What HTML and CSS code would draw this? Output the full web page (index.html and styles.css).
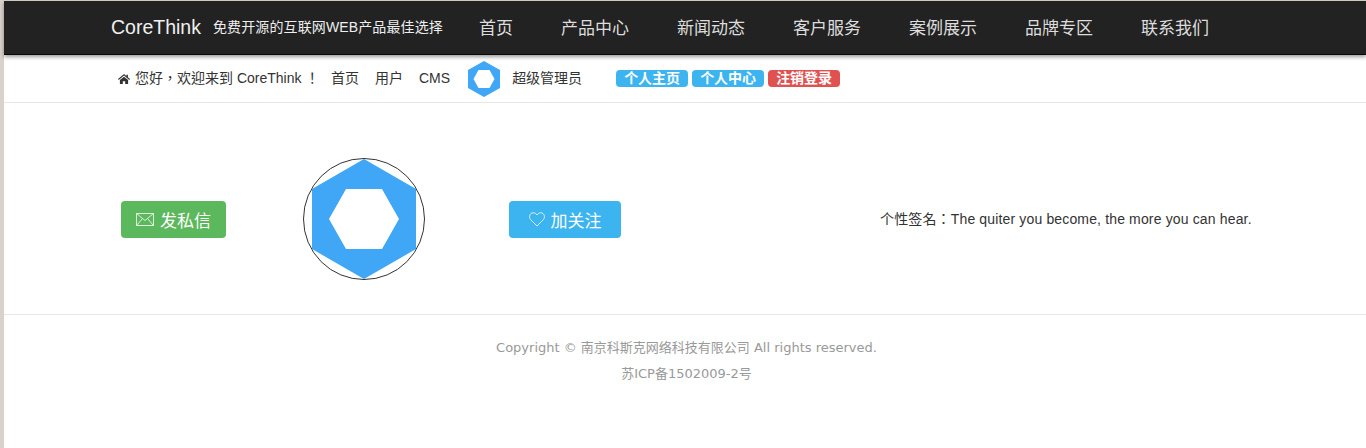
FILE: index.html
```html
<!DOCTYPE html>
<html lang="zh-CN">
<head>
<meta charset="utf-8">
<title>CoreThink</title>
<link rel="stylesheet" href="styles.css">
</head>
<body>
<div class="page">
  <header class="navbar">
    <a class="brand">CoreThink</a>
    <span class="slogan">免费开源的互联网WEB产品最佳选择</span>
    <nav class="mainnav">
      <a>首页</a><a>产品中心</a><a>新闻动态</a><a>客户服务</a><a>案例展示</a><a>品牌专区</a><a>联系我们</a>
    </nav>
  </header>
  <div class="topbar">
    <svg class="home" viewBox="0 0 12 10" width="12" height="10"><path fill="#333" d="M6 0 L8.4 2 V0.8 H9.9 V3.3 L12 5.1 L11.3 5.9 L6 1.6 L0.7 5.9 L0 5.1 Z M1.9 6 L6 2.7 L10.1 6 V10 H7.2 V7.2 H4.8 V10 H1.9 Z"/></svg>
    <span class="welcome" lang="zh-TW">您好，欢迎来到 CoreThink ！</span>
    <a class="toplink">首页</a><a class="toplink">用户</a><a class="toplink latin">CMS</a>
    <svg class="miniavatar" viewBox="0 0 32 36" width="32" height="36"><path fill="#3fa7f5" fill-rule="evenodd" d="M16 0 L32 9 V27 L16 36 L0 27 V9 Z M10.5 9 L5.5 18 L10.5 27 H21.5 L26.5 18 L21.5 9 Z"/></svg>
    <span class="username">超级管理员</span>
    <div class="labels">
      <span class="label blue">个人主页</span><span class="label blue">个人中心</span><span class="label red">注销登录</span>
    </div>
  </div>
  <section class="profile">
    <a class="btn green"><svg viewBox="0 0 18 13" width="18" height="13"><path fill="none" stroke="#fff" stroke-width="0.8" d="M0.5 0.5 H17.5 V12.5 H0.5 Z M0.5 0.5 L9 7.5 L17.5 0.5 M0.5 12.5 L6.5 5.5 M17.5 12.5 L11.5 5.5"/></svg>发私信</a>
    <div class="avatar">
      <svg viewBox="0 0 104 120" width="104" height="120"><path fill="#3fa7f5" fill-rule="evenodd" d="M52 0 L104 30 V90 L52 120 L0 90 V30 Z M34 30 L17 60 L34 90 H70 L87 60 L70 30 Z"/></svg>
    </div>
    <a class="btn blue"><svg viewBox="0 0 16 15" width="16" height="15"><path fill="none" stroke="#fff" stroke-width="0.8" d="M8 14 L1.6 7.6 C-0.4 5.4 0.6 1 4 0.8 C5.8 0.7 7.2 1.6 8 3 C8.8 1.6 10.2 0.7 12 0.8 C15.4 1 16.4 5.4 14.4 7.6 Z"/></svg>加关注</a>
    <p class="signature" lang="zh-TW">个性签名：The quiter you become, the more you can hear.</p>
  </section>
  <footer class="footer">
    <p>Copyright © 南京科斯克网络科技有限公司 All rights reserved.</p>
    <p>苏ICP备1502009-2号</p>
  </footer>
</div>
</body>
</html>
```
FILE: styles.css
```css
* { box-sizing: border-box; }
html, body { margin: 0; height: 100%; }
body {
  background: #d9d2ca;
  font-family: "Liberation Sans", "Noto Sans CJK SC", sans-serif;
  padding: 1px 0 0 4px;
  overflow: hidden;
}
.page { background: #fff; height: 447px; }
.navbar {
  height: 54px;
  background: #222;
  border-bottom: 1px solid #080808;
  box-shadow: 0 2px 4px rgba(0,0,0,.4);
  display: flex;
  align-items: center;
  padding-left: 107px;
  color: #fff;
  position: relative;
}
.brand { font-size: 19.5px; color: #f0f0f0; width: 102px; }
.slogan { font-size: 14px; letter-spacing: 0.12px; color: #eee; width: 266px; white-space: nowrap; margin-bottom: 3px; }
.mainnav { display: flex; gap: 48px; margin-bottom: 3px; }
.mainnav a { font-size: 17px; color: #ddd; white-space: nowrap; }
.topbar {
  height: 48px;
  border-bottom: 1px solid #e7e7e7;
  display: flex;
  align-items: center;
  padding-left: 114px;
  font-size: 14px;
  color: #333;
}
.home { margin: 0 5px 0 0; }
.welcome {
  width: 196px;
  margin-bottom: 4px;
  font-family: "Liberation Sans", "Noto Sans CJK TC", sans-serif;
  white-space: nowrap;
}
.toplink { margin: 0 16px 4px 0; white-space: nowrap; }
.toplink.latin { margin-bottom: 2px; }
.miniavatar { margin-left: 2px; margin-right: 12px; }
.username { width: 104px; margin-bottom: 4px; white-space: nowrap; }
.labels { display: flex; gap: 4px; }
.label {
  height: 17px;
  line-height: 16px;
  padding: 0 8px;
  border-radius: 4px;
  font-size: 14px;
  font-weight: bold;
  color: #fff;
}
.label.blue { background: #3cb4f0; }
.label.red { background: #e05252; }
.profile {
  height: 212px;
  padding: 21px 0 0 117px;
  border-bottom: 1px solid #e7e7e7;
  display: flex;
  align-items: center;
}
.btn {
  height: 37px;
  display: flex;
  align-items: center;
  justify-content: center;
  gap: 6px;
  border-radius: 4px;
  color: #fff;
  font-size: 17px;
}
.btn.green { width: 105px; background: #5cb85c; }
.btn.blue { width: 112px; background: #3cb4f0; }
.avatar {
  width: 122px;
  height: 122px;
  margin: 0 84px 0 77px;
  border: 1px solid #333;
  border-radius: 50%;
  display: flex;
  align-items: center;
  justify-content: center;
}
.signature {
  margin: 0 0 2px 259px;
  font-family: "Liberation Sans", "Noto Sans CJK TC", sans-serif;
  font-size: 14px;
  letter-spacing: 0.15px;
  color: #333;
  white-space: nowrap;
}
.footer {
  padding: 23px 0 0 3px;
  text-align: center;
  color: #999;
  font-family: "DejaVu Sans", "Noto Sans CJK SC", sans-serif;
}
.footer p { margin: 0 0 6px; line-height: 20px; font-size: 13px; }
```
